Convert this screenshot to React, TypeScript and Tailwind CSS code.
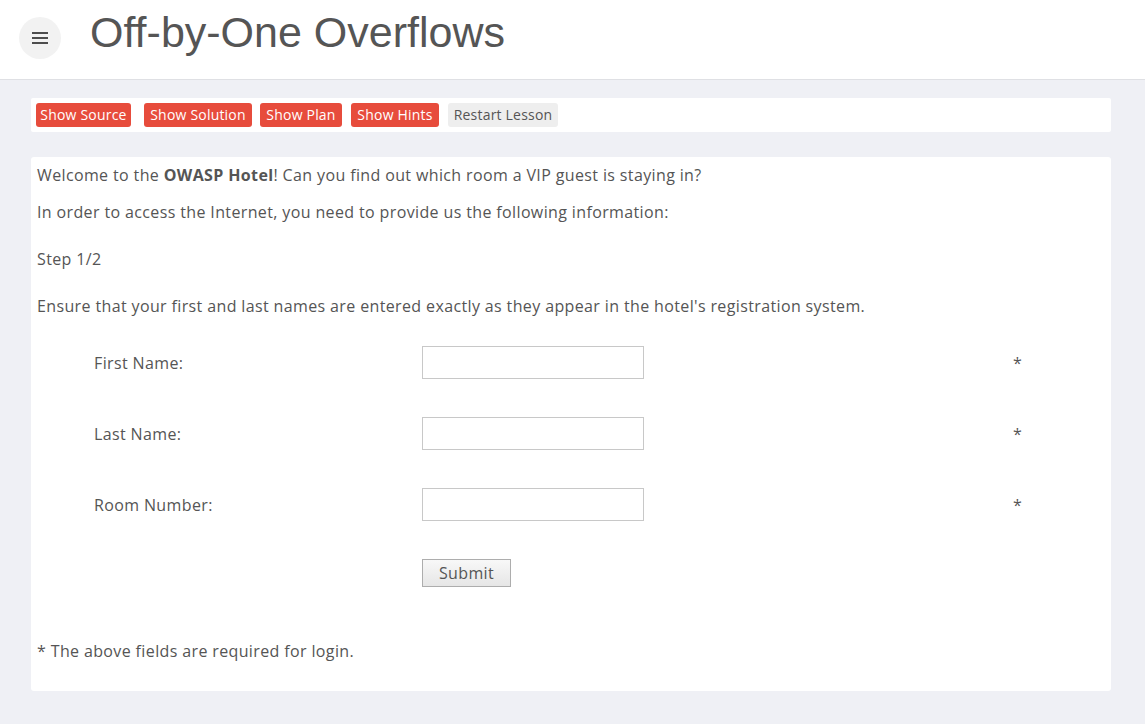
import React from "react";

const Row = ({ label }: { label: string }) => (
  <div className="flex items-center h-[33px]">
    <div className="w-[328px]">{label}</div>
    <input
      type="text"
      className="w-[222px] h-[33px] border border-[#c8c8c8] bg-white outline-none"
    />
    <div className="ml-[369px]">*</div>
  </div>
);

export default function App() {
  const red =
    "h-[24px] rounded-[3px] bg-[#e74c3c] text-white text-[14px] leading-[24px] tracking-[0.2px] whitespace-nowrap text-center";
  return (
    <div
      className="min-h-[724px] bg-[#eff0f5] text-[#555555] text-[16px] tracking-[0.37px]"
      style={{ fontFamily: '"Open Sans", sans-serif' }}
    >
      <header className="h-[80px] bg-white border-b border-[#dfe0e4] flex items-start">
        <div className="ml-[19px] mt-[17px] w-[42px] h-[42px] rounded-full bg-[#f2f2f2] flex flex-col items-center justify-center gap-[3px]">
          <span className="block w-[16px] h-[2px] bg-[#4d4d4d]" />
          <span className="block w-[16px] h-[2px] bg-[#4d4d4d]" />
          <span className="block w-[16px] h-[2px] bg-[#4d4d4d]" />
        </div>
        <h1
          className="ml-[29px] mt-[7px] text-[43px] leading-[50px] tracking-normal text-[#555555]"
          style={{ fontFamily: '"Liberation Sans", Arial, sans-serif' }}
        >
          Off-by-One Overflows
        </h1>
      </header>

      <div className="ml-[31px] mr-[34px] mt-[18px] h-[34px] bg-white rounded-[2px] flex items-center px-[5px]">
        <button className={red + " w-[95px]"}>Show Source</button>
        <button className={red + " w-[108px] ml-[13px]"}>Show Solution</button>
        <button className={red + " w-[82px] ml-[8px]"}>Show Plan</button>
        <button className={red + " w-[88px] ml-[9px]"}>Show Hints</button>
        <button className="ml-[9px] w-[110px] h-[24px] rounded-[3px] bg-[#eeeeee] text-[#555] text-[14px] leading-[24px] tracking-[0.2px] whitespace-nowrap text-center">
          Restart Lesson
        </button>
      </div>

      <div className="ml-[31px] mr-[34px] mt-[25px] bg-white rounded-[3px] px-[6px] pt-[6px] pb-[28px] leading-[24px]">
        <p>
          Welcome to the <b className="font-bold">OWASP Hotel</b>! Can you find out which room a VIP guest is staying in?
        </p>
        <p className="mt-[13px]">In order to access the Internet, you need to provide us the following information:</p>
        <p className="mt-[23px]">Step 1/2</p>
        <p className="mt-[23px]">
          Ensure that your first and last names are entered exactly as they appear in the hotel's registration system.
        </p>
        <div className="pl-[57px] mt-[28px] flex flex-col gap-[38px]">
          <Row label="First Name:" />
          <Row label="Last Name:" />
          <Row label="Room Number:" />
          <div className="pl-[328px]">
            <button className="w-[89px] h-[28px] border border-[#adadad] bg-gradient-to-b from-[#f8f8f8] to-[#e6e6e6] text-[#555] text-[16px] leading-[26px]">
              Submit
            </button>
          </div>
        </div>
        <p className="mt-[52px]">* The above fields are required for login.</p>
      </div>
    </div>
  );
}
